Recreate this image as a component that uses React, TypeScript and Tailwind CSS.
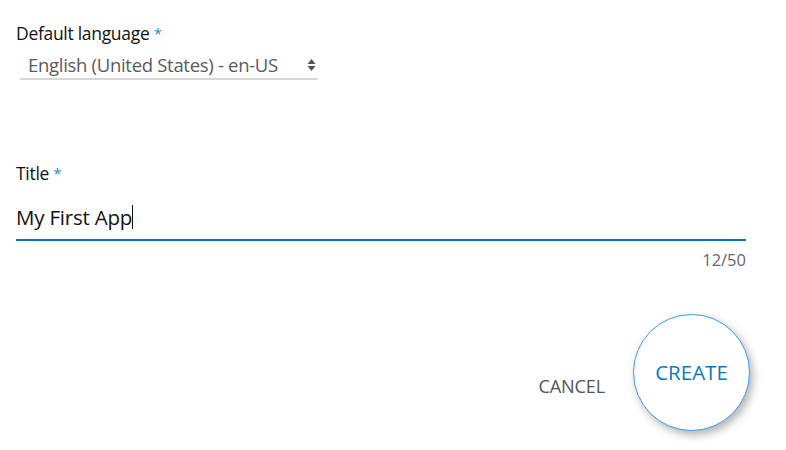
import React from "react";

export default function App() {
  return (
    <div className="w-[786px] h-[450px] bg-white relative overflow-hidden" style={{ fontFamily: '"Open Sans", "Noto Sans", sans-serif' }}>
      <div className="pl-4 pt-[21px]">
        <div className="text-[17.5px] leading-[24px] text-[#111] tracking-[-0.3px]">
          Default language <span className="text-[#1e88d0] text-[15px] align-top">*</span>
        </div>
        <div className="mt-[8px] ml-1 w-[298px] flex items-center justify-between border-b-2 border-[#d6d6d6] pb-[1px] pl-2 pr-[2px]">
          <span className="text-[18.5px] leading-[24px] text-[#5a5a5a] tracking-[-0.3px]">English (United States) - en-US</span>
          <svg width="9" height="14" viewBox="0 0 9 14">
            <path d="M4.5 1 L8.5 6 H0.5 Z" fill="#555" />
            <path d="M4.5 13 L8.5 8 H0.5 Z" fill="#555" />
          </svg>
        </div>
      </div>
      <div className="pl-4 pt-[81px] w-[746px]">
        <div className="text-[17.5px] leading-[24px] text-[#111] tracking-[-0.3px]">
          Title <span className="text-[#1e88d0] text-[15px] align-top">*</span>
        </div>
        <div className="mt-[19px] flex items-center border-b-2 border-[#0b74b8] pb-[9px]">
          <span className="text-[20.5px] leading-[26px] text-[#111] tracking-[-0.2px]">My First App</span>
          <span className="w-px h-[24px] bg-[#111]"></span>
        </div>
        <div className="text-right text-[16.5px] leading-[20px] text-[#666] mt-[9px]">12/50</div>
      </div>
      <div className="flex items-center justify-end pr-[36px] mt-[44px] gap-[28px]">
        <button className="text-[18.2px] text-[#555] tracking-[-0.2px] mt-[28px]">CANCEL</button>
        <button className="w-[117px] h-[117px] rounded-full bg-white border border-[#3a9af0] text-[#0b78bf] text-[20.5px] shadow-[3px_4px_8px_rgba(0,0,0,0.3)]">CREATE</button>
      </div>
    </div>
  );
}
